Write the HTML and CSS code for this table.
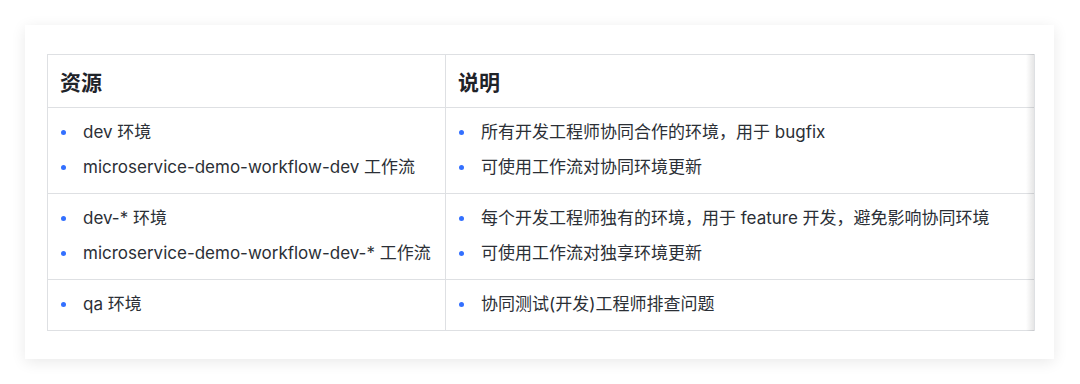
FILE: index.html
```html
<!DOCTYPE html>
<html lang="zh-CN">
<head>
<meta charset="utf-8">
<link rel="stylesheet" href="styles.css">
</head>
<body>
<div class="card">
  <div class="table-wrap">
    <table class="res-table">
      <colgroup>
        <col class="col-a">
        <col class="col-b">
      </colgroup>
      <thead>
        <tr><th>资源</th><th>说明</th></tr>
      </thead>
      <tbody>
        <tr>
          <td><ul class="list"><li>dev 环境</li><li>microservice-demo-workflow-dev 工作流</li></ul></td>
          <td><ul class="list"><li>所有开发工程师协同合作的环境，用于 bugfix</li><li>可使用工作流对协同环境更新</li></ul></td>
        </tr>
        <tr>
          <td><ul class="list"><li>dev-* 环境</li><li>microservice-demo-workflow-dev-* 工作流</li></ul></td>
          <td><ul class="list"><li>每个开发工程师独有的环境，用于 feature 开发，避免影响协同环境</li><li>可使用工作流对独享环境更新</li></ul></td>
        </tr>
        <tr>
          <td><ul class="list"><li>qa 环境</li></ul></td>
          <td><ul class="list"><li>协同测试(开发)工程师排查问题</li></ul></td>
        </tr>
      </tbody>
    </table>
  </div>
</div>
</body>
</html>
```
FILE: styles.css
```css
html, body {
  margin: 0;
  padding: 0;
  background: #ffffff;
}
body {
  width: 1080px;
  height: 384px;
  overflow: hidden;
  font-family: "Inter", "Noto Sans CJK SC", sans-serif;
  color: #1f2329;
}
.card {
  box-sizing: border-box;
  margin: 25px 0 0 25px;
  width: 1029px;
  height: 334px;
  padding: 29px 20px 0 22px;
  background: #ffffff;
  box-shadow: 0 3px 14px rgba(0, 0, 0, 0.09);
}
.table-wrap {
  width: 987px;
  position: relative;
}
.table-wrap::after {
  content: "";
  position: absolute;
  top: 0;
  bottom: 0;
  right: 0;
  width: 8px;
  pointer-events: none;
  background: linear-gradient(to left, rgba(0,0,0,0.10), rgba(0,0,0,0));
}
.res-table {
  width: 987px;
  border-collapse: collapse;
  table-layout: fixed;
}
.col-a { width: 398px; }
.col-b { width: 589px; }
.res-table th,
.res-table td {
  border: 1px solid #dee0e3;
  text-align: left;
  vertical-align: top;
}
.res-table th {
  height: 52px;
  padding: 0 12px;
  font-size: 21px;
  font-weight: 600;
  color: #1f2329;
  vertical-align: middle;
}
.res-table td {
  padding: 12px 12px 13px;
  font-size: 17px;
  color: #2b2f36;
}
.list {
  margin: 0;
  padding: 0;
  list-style: none;
}
.list li {
  position: relative;
  padding-left: 23px;
  line-height: 25px;
}
.list li + li {
  margin-top: 10px;
}
.list li::before {
  content: "";
  position: absolute;
  left: 1px;
  top: 10px;
  width: 5px;
  height: 5px;
  border-radius: 50%;
  background: #3370ff;
}
```
